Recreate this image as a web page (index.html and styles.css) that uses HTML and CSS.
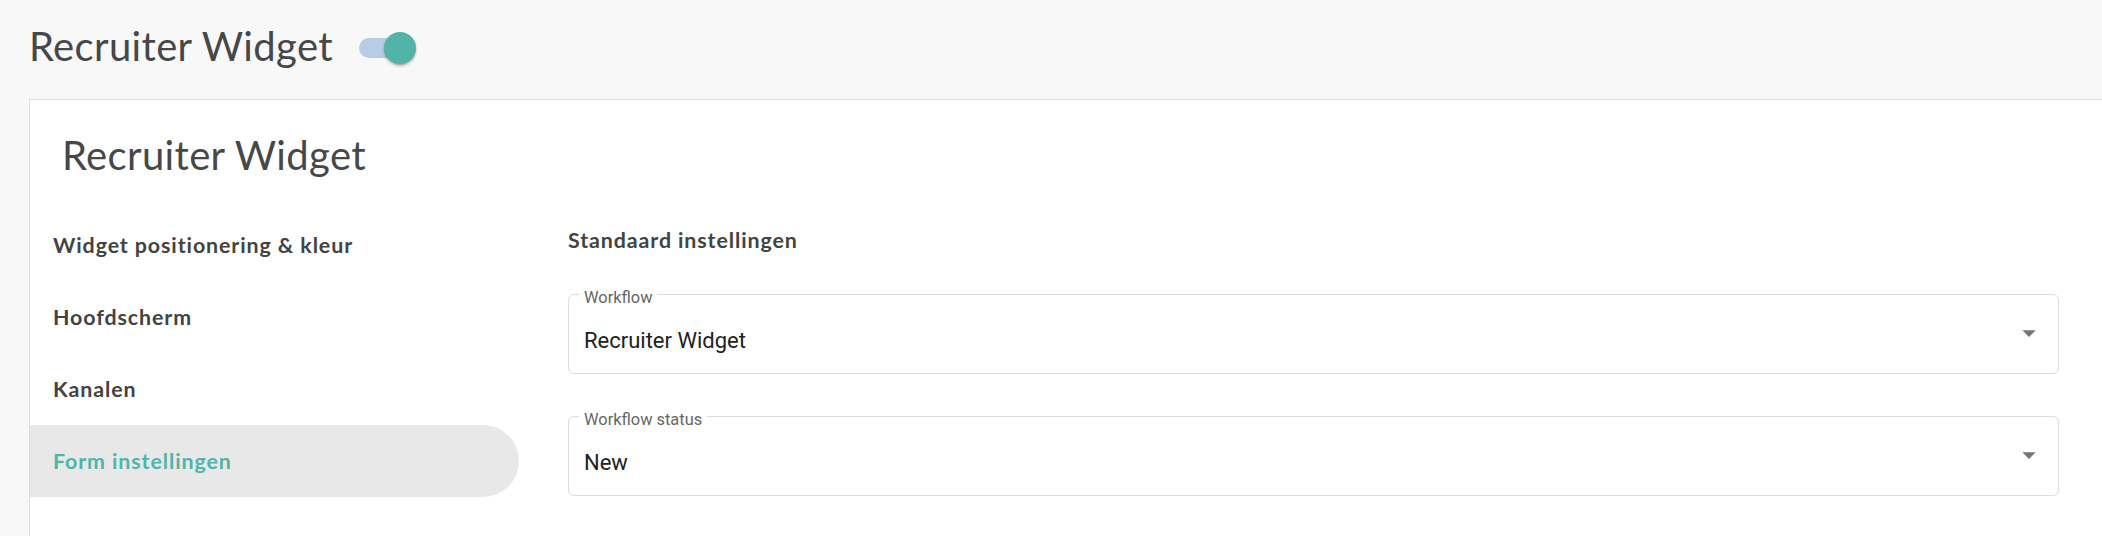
FILE: index.html
```html
<!DOCTYPE html>
<html lang="nl">
<head>
<meta charset="utf-8">
<title>Recruiter Widget</title>
<link rel="stylesheet" href="styles.css">
</head>
<body>
<header class="page-header">
  <h1 class="page-title">Recruiter Widget</h1>
  <span class="toggle" role="switch" aria-checked="true">
    <span class="toggle-track"></span>
    <span class="toggle-thumb"></span>
  </span>
</header>
<main class="card">
  <h2 class="card-title">Recruiter Widget</h2>
  <div class="card-body">
    <nav class="side-nav">
      <div class="nav-item">Widget positionering &amp; kleur</div>
      <div class="nav-item">Hoofdscherm</div>
      <div class="nav-item">Kanalen</div>
      <div class="nav-item active">Form instellingen</div>
    </nav>
    <section class="content">
      <h3 class="section-title">Standaard instellingen</h3>
      <div class="field">
        <span class="field-label">Workflow</span>
        <span class="field-value">Recruiter Widget</span>
        <svg class="field-arrow" viewBox="0 0 24 24" width="32" height="32"><path d="M7 10l5 5 5-5z"/></svg>
      </div>
      <div class="field">
        <span class="field-label">Workflow status</span>
        <span class="field-value">New</span>
        <svg class="field-arrow" viewBox="0 0 24 24" width="32" height="32"><path d="M7 10l5 5 5-5z"/></svg>
      </div>
    </section>
  </div>
</main>
</body>
</html>
```

FILE: styles.css
```css
* { box-sizing: border-box; }

html, body {
  margin: 0;
  padding: 0;
  height: 100%;
}

body {
  background: #f8f8f8;
  font-family: "Lato", "Open Sans", sans-serif;
  color: #474747;
  overflow: hidden;
}

.page-header {
  height: 99px;
  display: flex;
  align-items: center;
  padding: 0 0 7px 29px;
}

.page-title {
  margin: 0;
  font-size: 40px;
  line-height: 48px;
  font-weight: 400;
  letter-spacing: 0.35px;
  color: #474747;
}

.toggle {
  position: relative;
  display: inline-block;
  width: 46px;
  height: 20px;
  margin-left: 26px;
  margin-top: 3px;
}

.toggle-track {
  display: block;
  width: 46px;
  height: 20px;
  border-radius: 10px;
  background: #b7cde5;
}

.toggle-thumb {
  position: absolute;
  left: 25px;
  top: -6px;
  width: 32px;
  height: 32px;
  border-radius: 50%;
  background: #52b3a8;
  box-shadow: 0 2px 3px rgba(0,0,0,0.25), 0 1px 1px rgba(0,0,0,0.12);
}

.card {
  margin-left: 29px;
  height: calc(100% - 99px);
  background: #fff;
  border-top: 1px solid #dedede;
  border-left: 1px solid #dedede;
}

.card-title {
  margin: 0;
  padding: 31px 0 30px 32px;
  font-size: 40px;
  line-height: 48px;
  font-weight: 400;
  letter-spacing: 0.35px;
  color: #474747;
}

.card-body {
  display: flex;
  gap: 49px;
}

.side-nav {
  width: 489px;
  flex: none;
  display: flex;
  flex-direction: column;
}

.nav-item {
  height: 72px;
  display: flex;
  align-items: center;
  padding-left: 23px;
  font-size: 21.4px;
  font-weight: 700;
  letter-spacing: 0.9px;
  color: #434343;
  border-radius: 0 36px 36px 0;
}

.nav-item.active {
  background: #e8e8e8;
  color: #4fb5a9;
}

.content {
  flex: 1;
  padding-right: 43px;
}

.section-title {
  margin: 16px 0 39px 0;
  font-size: 21.4px;
  line-height: 30px;
  font-weight: 700;
  letter-spacing: 0.9px;
  color: #434343;
}

.field {
  position: relative;
  height: 80px;
  border: 1px solid #dcdcdc;
  border-radius: 6px;
  margin-bottom: 42px;
  display: flex;
  align-items: center;
  padding: 12px 0 0 15px;
  font-family: "Roboto", "Liberation Sans", sans-serif;
}

.field-label {
  position: absolute;
  left: 10px;
  top: -6px;
  padding: 0 5px;
  background: #fff;
  font-size: 16.4px;
  line-height: 18px;
  color: #666;
}

.field-value {
  font-size: 22px;
  color: #212121;
}

.field-arrow {
  position: absolute;
  right: 13px;
  top: 22px;
  fill: #757575;
}
```
